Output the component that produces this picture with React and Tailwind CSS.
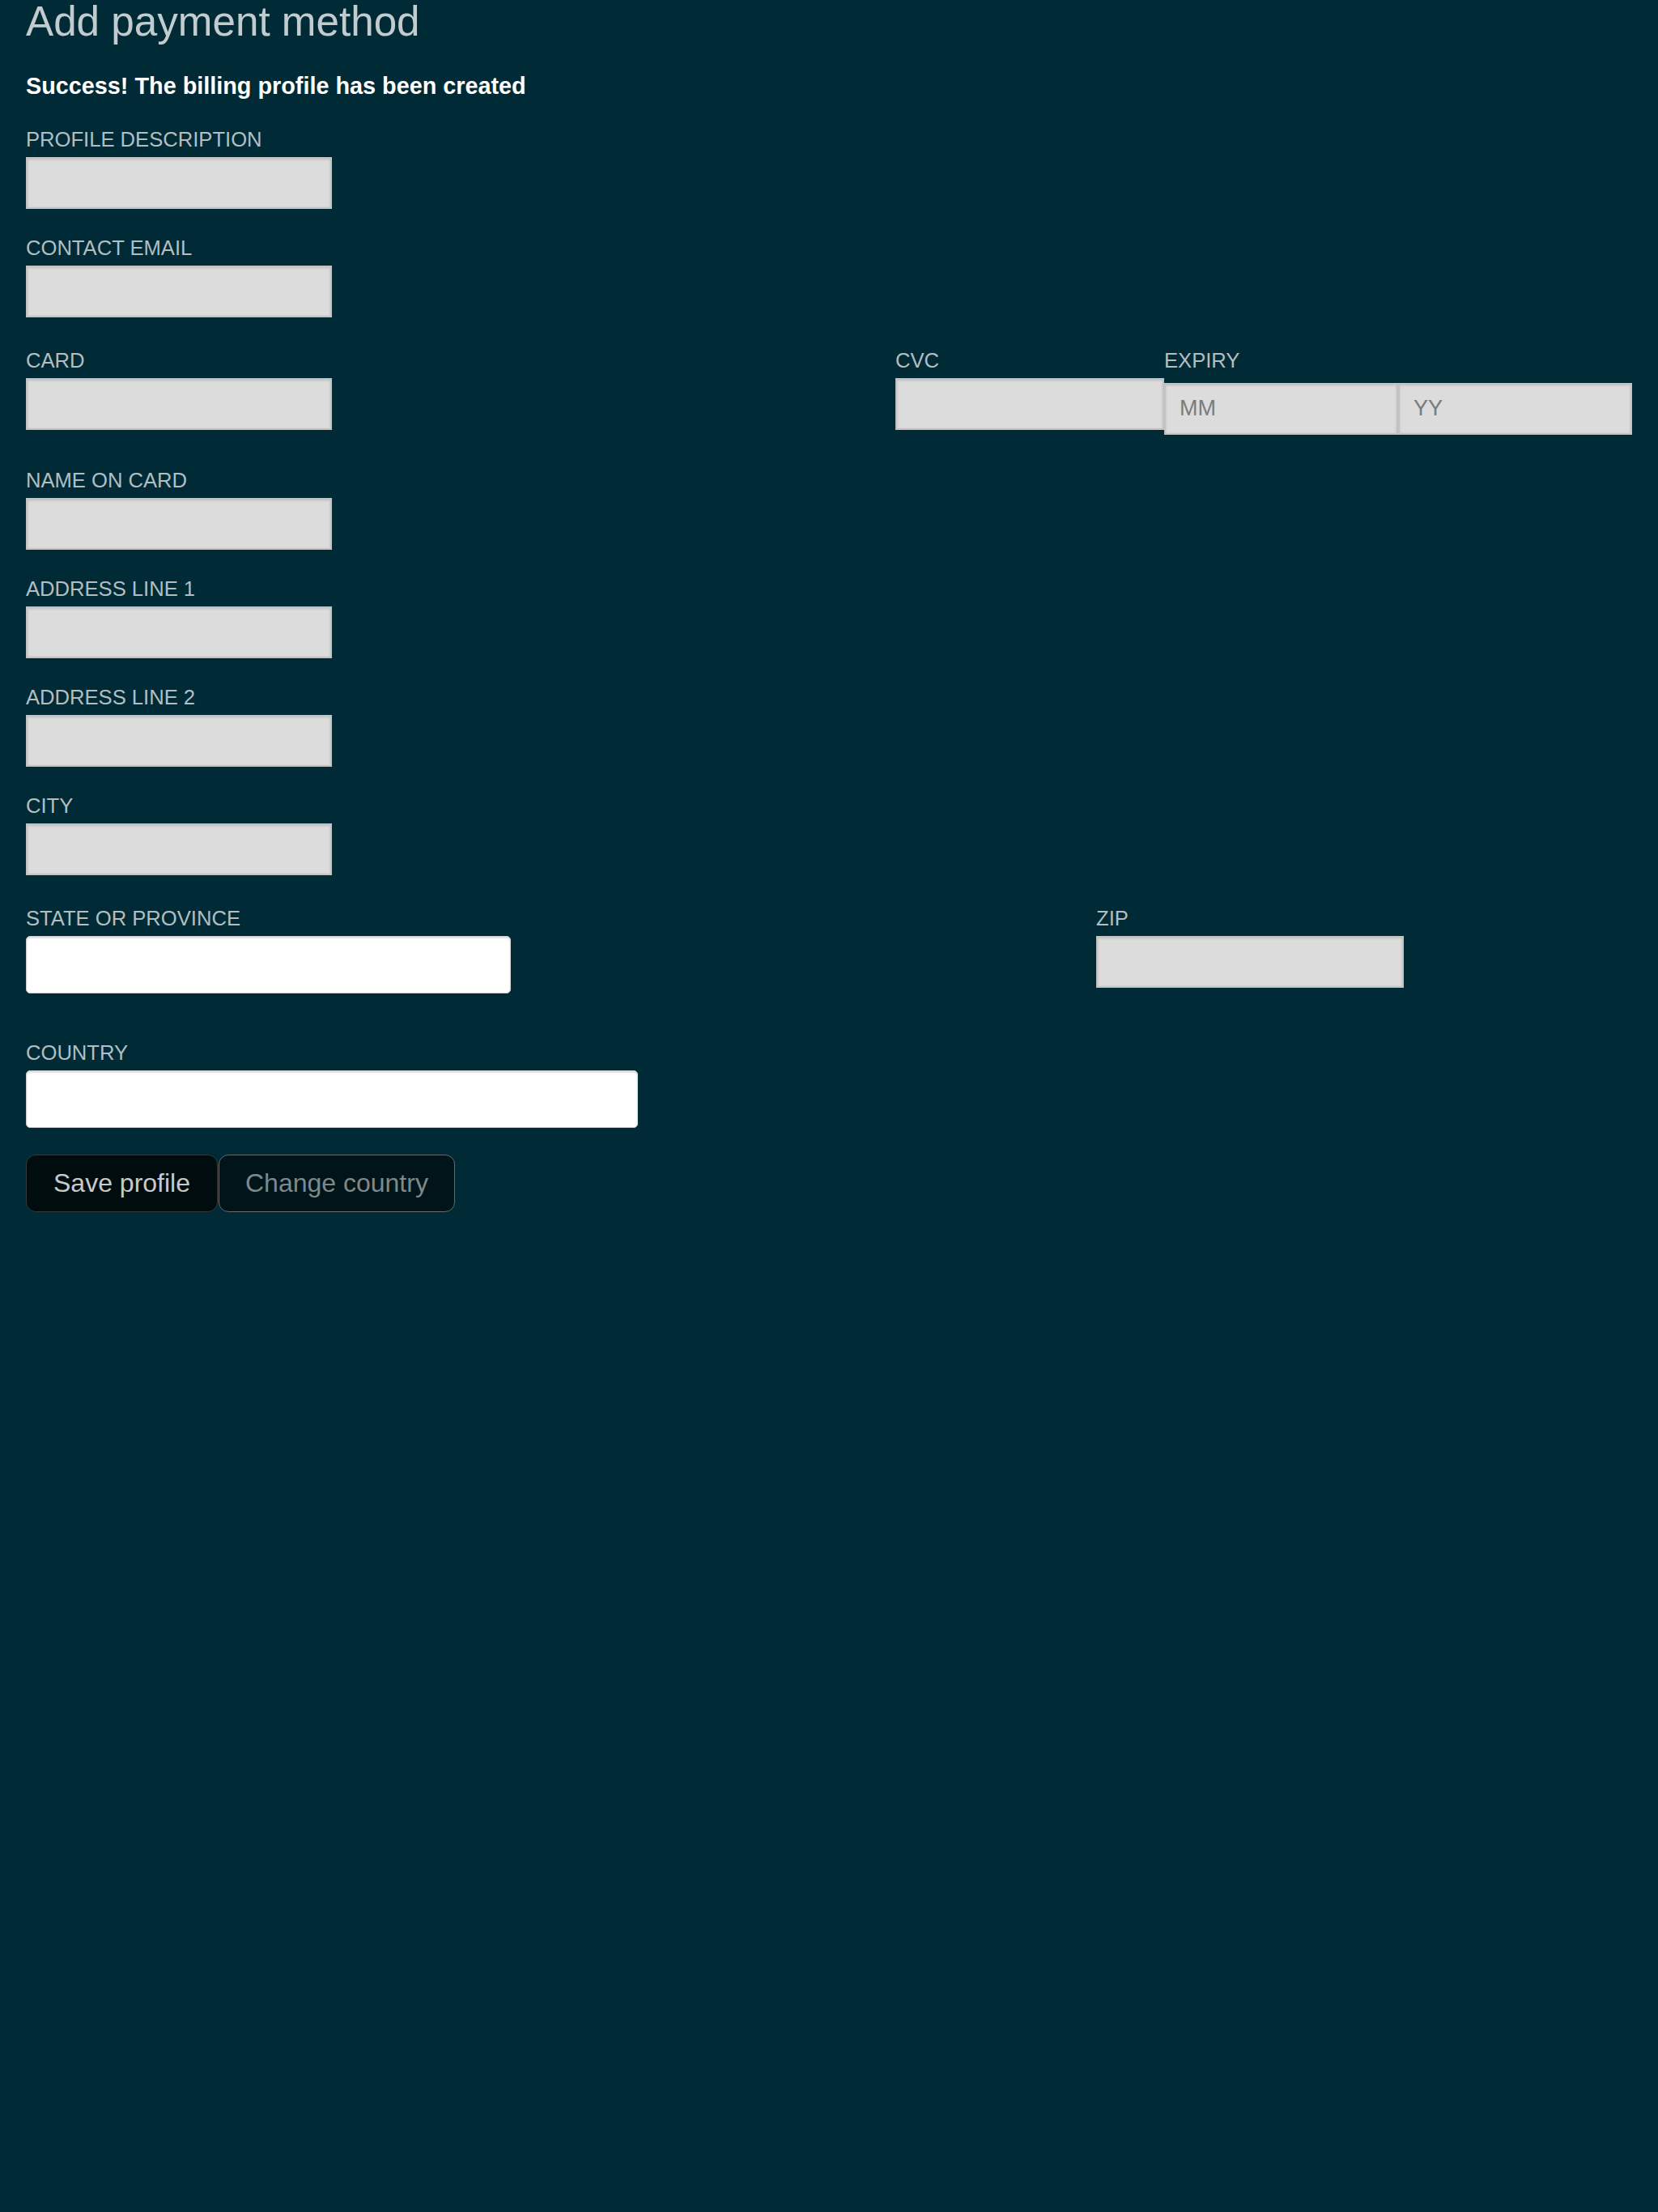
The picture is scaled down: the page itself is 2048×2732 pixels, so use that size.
import React from 'react'

const grayInput =
  'block h-[64px] bg-[#dcdcdc] border-2 border-[#c3c3c3] shadow-[inset_0_1px_3px_rgba(0,0,0,0.14)] outline-none text-[27px] pl-[17px] text-[#555] placeholder:text-[#7b7b7b]'

const whiteInput =
  'block h-[71px] bg-white border border-[#cdcdcd] rounded-[5px] shadow-[inset_0_2px_2px_rgba(0,0,0,0.13)] outline-none text-[27px] px-3'

function Label({ children }) {
  return <label className="block text-[25.6px] leading-[normal] text-[#b3bec1]">{children}</label>
}

function Field({ label, className = '' }) {
  return (
    <div className={className}>
      <Label>{label}</Label>
      <input type="text" className={grayInput + ' mt-[7px] w-[378px]'} />
    </div>
  )
}

export default function App() {
  return (
    <div className="flow-root min-h-screen bg-[#002b36] px-8 font-['Liberation_Sans',Arial,sans-serif]">
      <h1 className="-mt-[3px] text-[51.2px] leading-[normal] font-normal text-[#c2cbce]">Add payment method</h1>
      <p className="mt-[33.5px] text-[28.8px] leading-[normal] font-bold text-white">
        Success! The billing profile has been created
      </p>

      <Field label="PROFILE DESCRIPTION" className="mt-[35px]" />
      <Field label="CONTACT EMAIL" className="mt-[34px]" />

      <div className="mt-[39px] flex items-start">
        <div className="w-[1074px]">
          <Label>CARD</Label>
          <input type="text" className={grayInput + ' mt-[7px] w-[378px]'} />
        </div>
        <div className="w-[332px]">
          <Label>CVC</Label>
          <input type="text" className={grayInput + ' mt-[7px] w-full h-[63px]'} />
        </div>
        <div className="flex-1">
          <Label>EXPIRY</Label>
          <div className="mt-[13px] flex">
            <input type="text" placeholder="MM" className={grayInput + ' w-0 flex-1 h-[63px]'} />
            <input type="text" placeholder="YY" className={grayInput + ' w-0 flex-1 h-[63px]'} />
          </div>
        </div>
      </div>

      <Field label="NAME ON CARD" className="mt-[42px]" />
      <Field label="ADDRESS LINE 1" className="mt-[34px]" />
      <Field label="ADDRESS LINE 2" className="mt-[34px]" />
      <Field label="CITY" className="mt-[34px]" />

      <div className="mt-[39px] flex items-start">
        <div className="w-[1322px]">
          <Label>STATE OR PROVINCE</Label>
          <input type="text" className={whiteInput + ' mt-[7px] w-[599px]'} />
        </div>
        <div>
          <Label>ZIP</Label>
          <input type="text" className={grayInput + ' mt-[7px] w-[380px]'} />
        </div>
      </div>

      <div className="mt-[59px]">
        <Label>COUNTRY</Label>
        <input type="text" className={whiteInput + ' mt-[7px] w-[756px]'} />
      </div>

      <div className="mt-[33px] flex gap-[1px]">
        <button className="rounded-xl border border-[#383838] bg-[#010c0e] px-[33px] py-4 text-[32px] leading-[normal] text-[#c6cacb]">
          Save profile
        </button>
        <button className="rounded-xl border border-[#6a6a6a] bg-[#00141a] px-[32px] py-4 text-[32px] leading-[normal] text-[#7e898b]">
          Change country
        </button>
      </div>
    </div>
  )
}
